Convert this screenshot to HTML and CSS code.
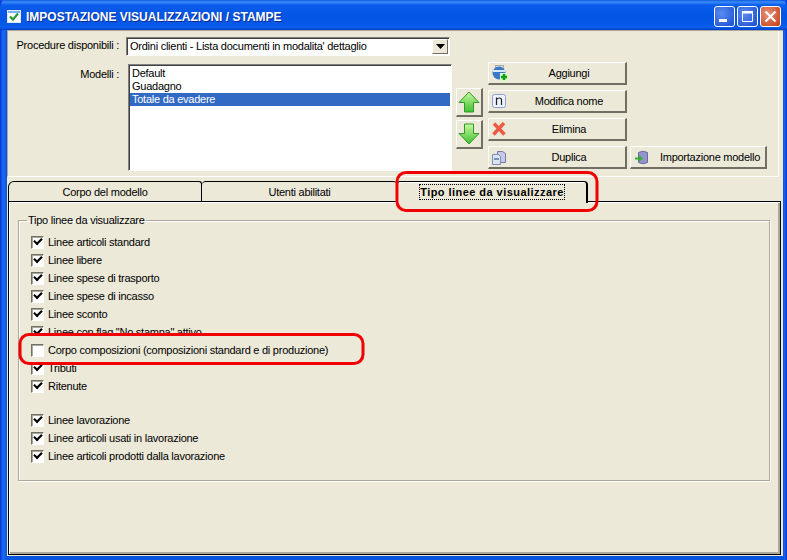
FILE: index.html
```html
<!DOCTYPE html>
<html lang="it">
<head>
<meta charset="utf-8">
<title>Impostazione visualizzazioni / stampe</title>
<link rel="stylesheet" href="styles.css">
</head>
<body>
<div class="window">
  <header class="titlebar">
    <svg class="app-icon" width="14" height="13" viewBox="0 0 14 13"><rect x="0.5" y="0.5" width="13" height="12" fill="#fff" stroke="#dfe8f8"/><rect x="1" y="1" width="12" height="2" fill="#7fb0f0"/><path d="M3 6.500l3 3 5-6" fill="none" stroke="#2a9a35" stroke-width="2.2"/></svg>
    <span class="title">IMPOSTAZIONE VISUALIZZAZIONI / STAMPE</span>
    <div class="win-buttons">
      <div class="win-btn"><svg width="21" height="21" viewBox="0 0 21 21"><rect x="5" y="13" width="8" height="3" fill="#fff"/></svg></div>
      <div class="win-btn"><svg width="21" height="21" viewBox="0 0 21 21"><path d="M5.5 6.5h10v9h-10z" fill="none" stroke="#fff"/><rect x="5" y="5" width="11" height="2.5" fill="#fff"/></svg></div>
      <div class="win-btn close"><svg width="21" height="21" viewBox="0 0 21 21"><path d="M5.5 5.5l10 10M15.5 5.5l-10 10" stroke="#fff" stroke-width="2.2"/></svg></div>
    </div>
  </header>
  <main class="client">
    <section class="top-panel">
      <div class="proc-row">
        <label class="field-label">Procedure disponibili :</label>
        <div class="combo">
          <span class="combo-text">Ordini clienti - Lista documenti in modalita' dettaglio</span>
          <span class="combo-arrow"><svg width="9" height="5" viewBox="0 0 9 5"><path d="M0 0h9L4.500 5z" fill="#000"/></svg></span>
        </div>
      </div>
      <div class="model-row">
        <label class="field-label model-label">Modelli :</label>
        <ul class="listbox">
          <li>Default</li>
          <li>Guadagno</li>
          <li class="selected">Totale da evadere</li>
        </ul>
        <div class="arrows">
          <button class="btn arrow-btn"><svg width="22" height="22" viewBox="0 0 22 22"><defs><linearGradient id="up" x1="0" y1="0" x2="0" y2="1"><stop offset="0" stop-color="#c8f8a0"/><stop offset="1" stop-color="#40c030"/></linearGradient></defs><path d="M11 1L21 11.500H15.500V21H6.500V11.500H1z" fill="url(#up)" stroke="#2f9a2a"/></svg></button>
          <button class="btn arrow-btn"><svg width="22" height="22" viewBox="0 0 22 22"><path d="M11 21L21 10.500H15.500V1H6.500V10.500H1z" fill="url(#up)" stroke="#2f9a2a"/></svg></button>
        </div>
        <div class="actions">
          <button class="btn action"><svg class="btn-icon" width="16" height="16" viewBox="0 0 16 16"><rect x="3.500" y="0.500" width="8" height="5" fill="#e0e0e0" stroke="#a8a8a8"/><circle cx="7" cy="8" r="6.500" fill="#3a78c8"/><path d="M1 6h12" stroke="#d8e8f8" stroke-width="2"/><rect x="8" y="8" width="8" height="8" fill="#d8f8c8"/><path d="M12 9v6M9 12h6" stroke="#12a012" stroke-width="2.500"/></svg><span>Aggiungi</span></button>
          <span class="spacer"></span>
          <button class="btn action"><svg class="btn-icon small" width="14" height="14" viewBox="0 0 14 14"><rect x="0.500" y="0.500" width="13" height="13" rx="2" fill="#eef2fc" stroke="#8c9edc"/><path d="M4.500 3.500V11M4.500 5.500Q5.500 4 7.500 4T9.500 6V11" fill="none" stroke="#202020" stroke-width="1.200"/></svg><span>Modifica nome</span></button>
          <span class="spacer"></span>
          <button class="btn action"><svg class="btn-icon small" width="14" height="14" viewBox="0 0 14 14"><path d="M2 1.500L12.500 12.500M12 1L1.500 12.500" stroke="#ea5a44" stroke-width="3.400"/></svg><span>Elimina</span></button>
          <span class="spacer"></span>
          <button class="btn action"><svg class="btn-icon small" width="14" height="15" viewBox="0 0 14 15"><path d="M5.500 1.500h5l3 2v9h-8z" fill="#c8c8ec" stroke="#7878a8"/><path d="M0.500 4.500h6l2 2v8h-8z" fill="#dce4f4" stroke="#7890b4"/><rect x="2" y="8" width="5" height="2" fill="#7890b4"/></svg><span>Duplica</span></button>
          <button class="btn action import"><svg class="btn-icon" width="16" height="15" viewBox="0 0 16 15"><path d="M4.500 2.500Q9 0 13.500 2.500V12.500Q9 15 4.500 12.500z" fill="#9494cc" stroke="#6a6aa0"/><path d="M1 7.500h4V5l4 3.500L5 12V9.500H1z" fill="#38b030"/></svg><span>Importazione modello</span></button>
        </div>
      </div>
    </section>
    <nav class="tabs">
      <div class="tab first">Corpo del modello</div>
      <div class="tab second">Utenti abilitati</div>
      <div class="tab active"><span class="focus">Tipo linee da visualizzare</span></div>
    </nav>
    <section class="pane">
      <fieldset class="group">
        <legend>Tipo linee da visualizzare</legend>
        <div class="row"><span class="check on"></span>Linee articoli standard</div>
        <div class="row"><span class="check on"></span>Linee libere</div>
        <div class="row"><span class="check on"></span>Linee spese di trasporto</div>
        <div class="row"><span class="check on"></span>Linee spese di incasso</div>
        <div class="row"><span class="check on"></span>Linee sconto</div>
        <div class="row"><span class="check on"></span>Linee con flag "No stampa" attivo</div>
        <div class="row raised"><span class="check"></span>Corpo composizioni (composizioni standard e di produzione)</div>
        <div class="row"><span class="check on"></span>Tributi</div>
        <div class="row"><span class="check on"></span>Ritenute</div>
        <div class="row-gap"></div>
        <div class="row"><span class="check on"></span>Linee lavorazione</div>
        <div class="row"><span class="check on"></span>Linee articoli usati in lavorazione</div>
        <div class="row"><span class="check on"></span>Linee articoli prodotti dalla lavorazione</div>
      </fieldset>
    </section>
  </main>
  <svg class="annotation" width="787" height="560" viewBox="0 0 787 560">
    <rect x="20" y="334.500" width="343" height="29" rx="9" fill="#ece9d8" stroke="#f00000" stroke-width="3"/>
    <rect x="397" y="172.500" width="200" height="38" rx="9" fill="none" stroke="#f00000" stroke-width="3"/>
  </svg>
</div>
</body>
</html>
```

FILE: styles.css
```css
* { box-sizing: border-box; }
html, body { margin: 0; padding: 0; }
body { width: 787px; height: 560px; overflow: hidden; background: #0a52dc; }
.window {
  position: relative;
  width: 787px;
  height: 560px;
  display: flex;
  flex-direction: column;
  background: linear-gradient(90deg, #0831d9 0, #1e6cf0 3px, #0855dd 7px, #0855dd 783px, #1662ea 785px, #0831d9 787px);
  font: 11px "Liberation Sans", Arial, sans-serif;
  letter-spacing: -0.25px;
  color: #000;
}
.titlebar {
  height: 30px;
  flex: none;
  display: flex;
  align-items: center;
  padding: 2px 6px 0 7px;
  border-radius: 7px 7px 0 0;
  background: linear-gradient(180deg, #0a5ae0 0, #3c8cf8 2px, #0a5cec 5px, #0456e4 14px, #0458e8 24px, #0a60f0 27px, #0340c8 30px);
}
.app-icon { flex: none; }
.title {
  margin: 2px 0 0 5px;
  color: #fff;
  font: bold 12px "Liberation Sans", Arial, sans-serif;
  letter-spacing: 0;
  text-shadow: 1px 1px 0 #0a2a90;
}
.win-buttons { margin-left: auto; display: flex; gap: 2px; }
.win-btn {
  width: 21px;
  height: 21px;
  border: 1px solid #fff;
  border-radius: 3px;
  display: flex;
  align-items: center;
  justify-content: center;
  background: radial-gradient(circle at 35% 35%, #5a8cf0, #1a4cd0);
}
.win-btn svg { flex: none; }
.win-btn.close { background: radial-gradient(circle at 35% 35%, #e89078, #c83c14); }
.client {
  flex: 1;
  margin: 0 4px 4px 7px;
  display: flex;
  flex-direction: column;
  background: #ece9d8;
  border-top: 1px solid #aca899;
  min-height: 0;
}
.top-panel {
  height: 146px;
  flex: none;
  margin-right: 4px;
  border-left: 1px solid #aca899;
  border-right: 1px solid #fff;
  border-bottom: 1px solid #fff;
  padding-top: 6px;
}
.proc-row { display: flex; height: 19px; }
.field-label { width: 111px; flex: none; text-align: right; line-height: 16px; }
.combo {
  margin-left: 7px;
  width: 324px;
  height: 19px;
  display: flex;
  justify-content: space-between;
  background: #fff;
  border: 1px solid;
  border-color: #808080 #fff #fff #808080;
  box-shadow: inset 1px 1px 0 #404040;
}
.combo-text { padding: 1px 0 0 3px; line-height: 15px; }
.combo-arrow {
  width: 16px;
  height: 15px;
  margin: 1px;
  display: flex;
  align-items: center;
  justify-content: center;
  background: #ece9d8;
  border: 1px solid;
  border-color: #fff #716f64 #716f64 #fff;
}
.model-row { display: flex; margin-top: 6px; }
.model-label { line-height: 24px; }
.listbox {
  list-style: none;
  width: 324px;
  height: 107px;
  margin: 2px 0 0 9px;
  padding: 2px 1px 0;
  background: #fff;
  border: 1px solid;
  border-color: #808080 #fff #fff #808080;
  box-shadow: inset 1px 1px 0 #404040;
}
.listbox li { height: 13px; line-height: 13px; padding-left: 2px; }
.listbox .selected { background: #316ac5; color: #fff; }
.btn {
  font: inherit;
  letter-spacing: inherit;
  color: #000;
  padding: 0;
  background: #ece9d8;
  border: 1px solid;
  border-color: #fff #716f64 #716f64 #fff;
  border-width: 1px 2px 2px 1px;
}
.arrows {
  margin: 26px 0 0 4px;
  display: flex;
  flex-direction: column;
  gap: 3px;
}
.arrow-btn {
  width: 27px;
  height: 29px;
  display: flex;
  align-items: center;
  justify-content: center;
}
.actions {
  width: 279px;
  margin-left: 5px;
  display: grid;
  grid-template-columns: 139px 137px;
  column-gap: 3px;
  row-gap: 5px;
  grid-auto-rows: 23px;
}
.spacer { display: block; }
.action {
  display: flex;
  align-items: center;
  padding-left: 3px;
}
.btn-icon { flex: none; }
.btn-icon.small { margin-right: 2px; }
.action span { flex: 1; text-align: center; padding-left: 5px; }
.tabs {
  flex: none;
  display: flex;
  margin: 4px 0 0 1px;
  height: 20px;
  position: relative;
  z-index: 1;
}
.tab {
  text-align: center;
  line-height: 20px;
  border: 1px solid #000;
  border-bottom: 0;
  background: #ece9d8;
}
.tab.first { width: 194px; border-radius: 6px 3px 0 0; }
.tab.second { width: 195px; border-left: 0; border-right: 0; border-radius: 4px 4px 0 0; }
.tab.active {
  width: 191px;
  height: 22px;
  margin-bottom: -2px;
  font-weight: bold;
  letter-spacing: 0.45px;
  border-right: 2px solid #000;
  border-radius: 3px 4px 0 0;
  box-shadow: inset 1px 1px 0 #fff;
}
.focus { outline: 1px dotted #000; padding: 1px 0; }
.pane {
  flex: 1;
  min-height: 0;
  margin: 0 2px 1px 1px;
  padding: 12px 10px 0 9px;
  border: 1px solid #000;
  box-shadow: inset 1px 1px 0 #fff, inset -2px -2px 0 #aca899;
}
.group {
  height: 267px;
  margin: 0;
  padding: 6px 0 0 12px;
  border: 1px solid #aca899;
  box-shadow: 1px 1px 0 #fff, inset 1px 1px 0 #fff;
}
.group legend { margin-left: -4px; padding: 0 1px; line-height: 13px; }
.row { display: flex; align-items: center; height: 18px; }
.row.raised { position: relative; z-index: 3; }
.row-gap { height: 16px; }
.check {
  position: relative;
  width: 13px;
  height: 13px;
  flex: none;
  margin-right: 4px;
  background: #fff;
  border: 1px solid;
  border-color: #716f64 #fff #fff #716f64;
  box-shadow: inset 1px 1px 0 #aca899;
}
.check.on::after {
  content: "";
  position: absolute;
  left: 2px;
  top: 1px;
  width: 6px;
  height: 3px;
  border-left: 2px solid #000;
  border-bottom: 2px solid #000;
  transform: rotate(-45deg) scale(1, 1.1);
}
.annotation { position: absolute; left: 0; top: 0; z-index: 2; pointer-events: none; }
```
